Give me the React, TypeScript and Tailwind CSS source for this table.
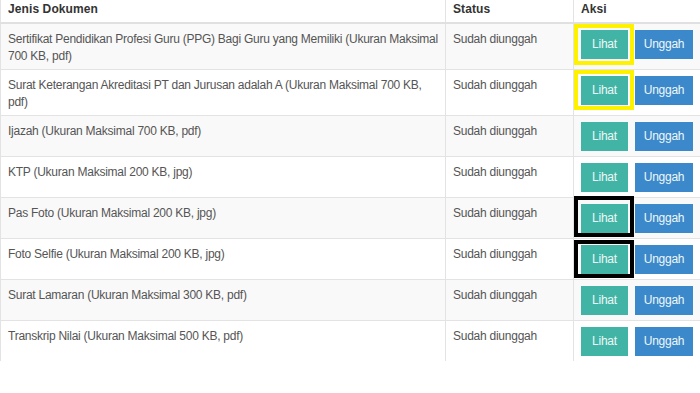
import { memo } from "react";

type Mark = { color: string; top: number; bottom: number };

const docs: { name: string; tall?: boolean; mark?: Mark }[] = [
  {
    name: "Sertifikat Pendidikan Profesi Guru (PPG) Bagi Guru yang Memiliki (Ukuran Maksimal 700 KB, pdf)",
    tall: true,
    mark: { color: "border-[#fff200]", top: -6, bottom: -6 },
  },
  {
    name: "Surat Keterangan Akreditasi PT dan Jurusan adalah A (Ukuran Maksimal 700 KB, pdf)",
    tall: true,
    mark: { color: "border-[#fff200]", top: -6, bottom: -5 },
  },
  { name: "Ijazah (Ukuran Maksimal 700 KB, pdf)" },
  { name: "KTP (Ukuran Maksimal 200 KB, jpg)" },
  { name: "Pas Foto (Ukuran Maksimal 200 KB, jpg)", mark: { color: "border-black", top: -8, bottom: -4 } },
  { name: "Foto Selfie (Ukuran Maksimal 200 KB, jpg)", mark: { color: "border-black", top: -5, bottom: -4 } },
  { name: "Surat Lamaran (Ukuran Maksimal 300 KB, pdf)" },
  { name: "Transkrip Nilai (Ukuran Maksimal 500 KB, pdf)" },
];

function App() {
  const cell = "border-l border-[#e3e3e3] align-top px-[7px] pt-[7px]";
  return (
    <div className="h-[393px] w-[700px] overflow-hidden bg-white font-['Liberation_Sans',Arial,sans-serif] text-[12px] leading-[17px] tracking-[-0.25px] text-[#555]">
      <table className="w-[701px] table-fixed border-collapse">
        <colgroup>
          <col className="w-[445px]" />
          <col className="w-[128px]" />
          <col className="w-[128px]" />
        </colgroup>
        <thead>
          <tr className="h-[23px] border-b-2 border-[#e0e0e0] text-left text-[12px] font-bold tracking-[0.1px] text-[#333]">
            <th className="border-l border-[#e3e3e3] px-[7px] align-top pt-[1px]">Jenis Dokumen</th>
            <th className="border-l border-[#e3e3e3] px-[7px] align-top pt-[1px]">Status</th>
            <th className="border-l border-[#e3e3e3] px-[7px] align-top pt-[1px]">Aksi</th>
          </tr>
        </thead>
        <tbody>
          {docs.map((d, i) => (
            <tr
              key={d.name}
              className={`${d.tall ? "h-[46px]" : "h-[41px]"} ${i % 2 === 0 ? "bg-[#f9f9f9]" : "bg-white"} ${
                i < docs.length - 1 ? "border-b border-[#e3e3e3]" : ""
              }`}
            >
              <td className={cell}>{d.name}</td>
              <td className={cell}>Sudah diunggah</td>
              <td className="border-l border-[#e3e3e3] align-top px-[7px] pt-[6px]">
                <div className="flex gap-[7px] text-[#eef8f7]">
                  <div className="relative">
                    <button className="h-[29px] w-[47px] bg-[#42b4a6] leading-[29px]">Lihat</button>
                    {d.mark && (
                      <div
                        className={`pointer-events-none absolute left-[-7px] right-[-6px] border-4 ${d.mark.color}`}
                        style={{ top: d.mark.top, bottom: d.mark.bottom }}
                      />
                    )}
                  </div>
                  <button className="h-[29px] w-[58px] bg-[#3b88cb] leading-[29px]">Unggah</button>
                </div>
              </td>
            </tr>
          ))}
        </tbody>
      </table>
    </div>
  );
}

export default memo(App);
